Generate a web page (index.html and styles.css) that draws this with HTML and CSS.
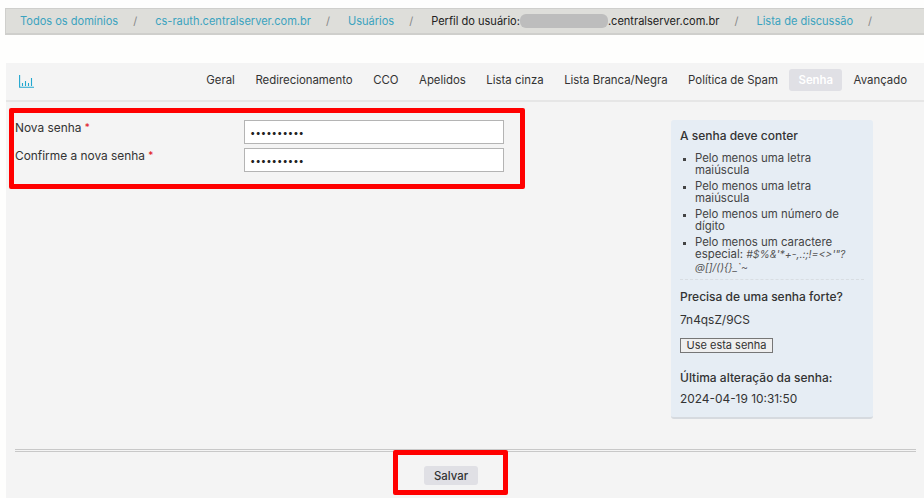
FILE: index.html
```html
<!DOCTYPE html>
<html lang="pt">
<head>
<meta charset="utf-8">
<title>Perfil do usuário</title>
<link rel="stylesheet" href="styles.css">
</head>
<body>
<nav class="crumbs">
  <a href="#">Todos os domínios</a><span class="sep">/</span>
  <a href="#">cs-rauth.centralserver.com.br</a><span class="sep">/</span>
  <a href="#">Usuários</a><span class="sep">/</span>
  <span class="current">Perfil do usuário:<span class="blur"></span>.centralserver.com.br</span><span class="sep">/</span>
  <a href="#">Lista de discussão</a><span class="sep">/</span>
</nav>
<main class="panel">
  <div class="tabs">
    <a href="#" class="stats" aria-label="Estatísticas">
      <svg width="15" height="13" viewBox="0 0 15 13" fill="none" stroke="#22a7cf" stroke-width="1.1">
        <path d="M.6 0v12.3H15"/><path d="M3.5 8v3M6.5 6v5M9.5 8v3M12.5 3v8"/>
      </svg>
    </a>
    <ul class="tablist">
      <li><a href="#">Geral</a></li>
      <li><a href="#">Redirecionamento</a></li>
      <li><a href="#">CCO</a></li>
      <li><a href="#">Apelidos</a></li>
      <li><a href="#">Lista cinza</a></li>
      <li><a href="#">Lista Branca/Negra</a></li>
      <li><a href="#">Política de Spam</a></li>
      <li class="active"><a href="#">Senha</a></li>
      <li class="last"><a href="#">Avançado</a></li>
    </ul>
  </div>
  <div class="content">
    <form class="fields">
      <div class="row">
        <label for="p1">Nova senha <b>*</b></label>
        <input id="p1" type="password" value="1234567890">
      </div>
      <div class="row">
        <label for="p2">Confirme a nova senha <b>*</b></label>
        <input id="p2" type="password" value="1234567890">
      </div>
    </form>
    <aside class="help">
      <h4>A senha deve conter</h4>
      <ul>
        <li>Pelo menos uma letra maiúscula</li>
        <li>Pelo menos uma letra maiúscula</li>
        <li>Pelo menos um número de dígito</li>
        <li>Pelo menos um caractere especial: <em>#$%&amp;'*+-,.:;!=&lt;&gt;'"?@[]/(){}_`~</em></li>
      </ul>
      <div class="divider"></div>
      <h4>Precisa de uma senha forte?</h4>
      <p>7n4qsZ/9CS</p>
      <button type="button" class="use">Use esta senha</button>
      <h4 class="last-change">Última alteração da senha:</h4>
      <p class="date">2024-04-19 10:31:50</p>
    </aside>
  </div>
  <div class="actions"><button type="button" class="save">Salvar</button></div>
</main>
<div class="mark mark-form"></div>
<div class="mark mark-save"></div>
</body>
</html>
```
FILE: styles.css
```css
* { box-sizing: border-box; }
html, body { height: 498px; overflow: hidden; }
body {
  margin: 0;
  padding-top: 8px;
  background: #fefefd;
  font-family: Inter, "Liberation Sans", sans-serif;
  font-size: 11.4px;
  color: #333;
  position: relative;
}
a { color: inherit; text-decoration: none; }

.crumbs {
  margin-left: 5px;
  height: 27px;
  background: #dededa;
  border: 1px solid #cfcfcc;
  border-right: 0;
  border-bottom-width: 2px;
  padding-left: 14px;
  display: flex;
  align-items: center;
  white-space: nowrap;
  font-size: 11.05px;
}
.crumbs a { color: #3ba3bf; }
.crumbs .sep { color: #888; margin: 0 18px 0 15px; }
.crumbs .current { color: #222; display: flex; align-items: center; }
.blur { width: 88px; height: 14px; background: #bdbdbd; border-radius: 6px; }

.panel {
  margin: 28px 0 0 6px;
  height: 435px;
  background: #f4f4f4;
  display: flex;
  flex-direction: column;
}
.tabs {
  height: 39px;
  border-bottom: 2px solid #e6e6e6;
  display: flex;
  align-items: center;
  justify-content: space-between;
  padding: 0 17px 3px 13px;
}
.stats { display: flex; margin-top: 3px; }
.tablist {
  list-style: none;
  margin: 0;
  padding: 0;
  display: flex;
  align-items: center;
  gap: 20.5px;
}
.tablist .active {
  background: #e0e0e5;
  color: #fff;
  font-weight: 600;
  border-radius: 3px;
  padding: 0 9px;
  height: 22px;
  line-height: 22px;
  margin: 0 -9px;
}

.content {
  flex: 1;
  display: flex;
  justify-content: space-between;
  align-items: flex-start;
  padding: 18px 51px 0 9px;
}
.fields { width: 489px; }
.row {
  display: flex;
  justify-content: space-between;
  margin-bottom: 4px;
  height: 24px;
}
.row label { font-size: 11.9px; line-height: 14px; color: #333; }
.row b { color: #e01020; font-weight: 400; font-size: 10px; vertical-align: 1px; }
.row input {
  width: 260px;
  height: 24px;
  border: 1px solid #b4b4b4;
  background: #fff;
  padding: 0 5px;
  font-size: 9.6px;
  color: #222;
  font-family: inherit;
}

.help {
  width: 202px;
  height: 299px;
  background: #e6edf4;
  border-bottom: 2px solid #d6dadf;
  border-radius: 3px;
  padding: 9px 9px 0;
}
.help h4 { margin: 0; font-size: 12px; line-height: 14px; font-weight: 500; color: #333; }
.help ul { margin: 9px 0 0; padding: 0 0 0 15px; list-style: square; font-size: 11.4px; line-height: 12px; color: #444; }
.help li { margin-bottom: 4px; }
.help li::marker { font-size: 8px; }
.help em { color: #555; font-size: 10.4px; }
.divider { border-top: 1px dashed #d8dde2; margin: 5px 0 10px; }
.help p { margin: 9px 0 0; font-size: 11.9px; line-height: 14px; }
.help p.date { margin-top: 7px; }
.use {
  display: block;
  margin: 11px 0 0;
  width: 93px;
  height: 15px;
  padding: 0;
  background: #efefef;
  border: 1px solid #767676;
  font: 11px/13px Inter, sans-serif;
  color: #333;
}
.help .last-change { margin-top: 18px; }

.actions {
  margin: 0 8px 0 9px;
  height: 49px;
  border-top: 3px double #c8c8c8;
  display: flex;
  justify-content: center;
  padding: 14px 29px 0 0;
}
.save {
  width: 54px;
  height: 19px;
  padding: 0;
  border: 0;
  border-radius: 3px;
  background: #e0e0e5;
  color: #333;
  font: 500 11.4px Inter, sans-serif;
}

.mark { position: absolute; border: 5px solid #f00; border-radius: 2px; }
.mark-form { left: 9px; top: 108px; width: 516px; height: 81px; }
.mark-save { left: 393px; top: 450px; width: 115px; height: 45px; }
```
